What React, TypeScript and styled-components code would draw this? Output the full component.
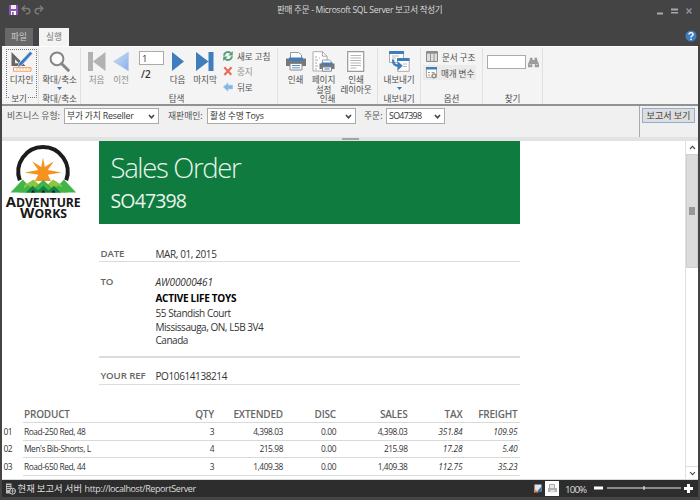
import React from "react";
import styled, { createGlobalStyle } from "styled-components";

const Global = createGlobalStyle`
  * { box-sizing: border-box; }
  body { margin: 0; background: #444; overflow: hidden; }
  svg { display: block; flex: none; }
`;
const ui = `"Noto Sans CJK KR", "Noto Sans", sans-serif`;
const latin = `"Open Sans", "Noto Sans", sans-serif`;

const Window = styled.div`
  width: 700px; height: 500px; background: #444; overflow: hidden;
  display: flex; flex-direction: column; padding: 0 2px 3px;
  font-family: ${ui}; font-size: 8.6px; color: #555;
`;
const TitleBar = styled.header`
  height: 28px; flex: none; display: grid; grid-template-columns: 275px minmax(0, 1fr) 60px; align-items: start;
  svg { margin-top: 5px; }
`;
const QuickAccess = styled.div`display: flex; gap: 3px; padding-left: 7px;`;
const Title = styled.div`
  font: 8.6px/20px "Open Sans", ${ui}; color: #d8d8d8; white-space: nowrap;
  letter-spacing: -0.32px;
`;
const WindowButtons = styled.div`display: flex; justify-content: flex-end; gap: 8px; padding-right: 6px;`;
const TabBar = styled.nav`
  height: 18px; flex: none; display: flex; gap: 6px; padding-left: 3px;
`;
const Tab = styled.div<{ $active?: boolean }>`
  width: ${(p) => (p.$active ? 30 : 28)}px; height: 18px; text-align: center; line-height: 17px;
  background: ${(p) => (p.$active ? "#f4f4f4" : "#686868")};
  color: ${(p) => (p.$active ? "#777" : "#d0d0d0")};
`;
const Help = styled.div`margin-left: auto; padding: 2px 1px 0 0;`;

const Ribbon = styled.section`
  height: 60px; flex: none; display: flex; background: #f4f4f4;
  border-top: 1px solid #fff; border-bottom: 2px solid #929292;
`;
const Group = styled.div<{ $w: number }>`
  width: ${(p) => p.$w}px; height: 56px; margin-top: 1px; flex: none; display: flex; flex-direction: column;
  border-right: 1px solid #e0e0e0;
`;
const GroupBody = styled.div<{ $left: number }>`
  height: 44px; flex: none; display: flex; align-items: flex-start;
  padding-left: ${(p) => p.$left}px;
`;
const GroupLabel = styled.div<{ $shift?: number }>`
  height: 12px; line-height: 13px; text-align: center; color: #505050; white-space: nowrap;
  padding-right: ${(p) => p.$shift ?? 0}px; letter-spacing: -0.1px;
  span { background: #f4f4f4; padding: 0 1px; position: relative; display: inline-block; height: 11px; }
`;
const Tool = styled.div<{ $w: number; $dim?: boolean; $dotted?: boolean }>`
  width: ${(p) => p.$w}px; height: ${(p) => (p.$dotted ? 49 : 44)}px; flex: none; display: flex; flex-direction: column; align-items: center;
  ${(p) => (p.$dotted ? "margin-top: 1px; padding-top: 1px; border: 1px dotted #777;" : "padding-top: 3px;")}
  color: ${(p) => (p.$dim ? "#8c8c8c" : "#505050")};
`;
const ToolLabel = styled.div`
  margin-top: 2px; line-height: 10.4px; text-align: center; white-space: pre; letter-spacing: -0.1px;
  & + svg { margin-top: 3px; }
`;
const Pager = styled.div`
  width: 25px; margin-top: 3px; color: #333; font: 9.5px/12px ${latin};
  div:last-child { font-size: 10px; font-weight: 600; padding: 3px 0 0 2px; }
`;
const Field = styled.div<{ $w: number; $h: number }>`
  width: ${(p) => p.$w}px; height: ${(p) => p.$h}px; background: #fff; border: 1px solid #aaa; padding-left: 2px;
  line-height: ${(p) => p.$h - 1}px;
`;
const SmallList = styled.div`display: flex; flex-direction: column;`;
const SmallTool = styled.div<{ $on?: boolean; $dim?: boolean; $h: number; $left?: number }>`
  height: ${(p) => p.$h}px; padding: 0 1px 0 ${(p) => p.$left ?? 3}px; display: flex; align-items: center; gap: 4px; white-space: nowrap;
  background: ${(p) => (p.$on ? "#ebebeb" : "none")}; color: ${(p) => (p.$dim ? "#909090" : "#505050")};
  letter-spacing: -0.05px;
`;
const FindBox = styled.div`display: flex; align-items: center; gap: 2px; margin-top: 7px;`;

const ParamBar = styled.section`
  height: 31px; flex: none; display: flex; align-items: flex-start; background: #f0f0f0; color: #555;
`;
const ParamLabel = styled.div<{ $w: number; $left: number }>`
  width: ${(p) => p.$w}px; margin-left: ${(p) => p.$left}px; line-height: 19px; white-space: nowrap; flex: none;
  font-size: 8.8px;
`;
const Select = styled.div<{ $w: number; $tight?: boolean }>`
  width: ${(p) => p.$w}px; height: 16px; margin-top: 2px; flex: none; background: #fff; border: 1px solid #ababab;
  display: flex; align-items: center; justify-content: space-between; padding: 0 3px 0 2px;
  font-family: "Open Sans", ${ui}; font-size: 8.8px; line-height: 14px; color: #333; white-space: nowrap;
  letter-spacing: ${(p) => (p.$tight ? -0.65 : -0.2)}px;
`;
const RunPane = styled.div`
  width: 59px; height: 31px; margin-left: auto; border-left: 1px solid #aaa; padding: 2px 0 0 2px;
`;
const RunButton = styled.div`
  width: 53px; height: 15px; border: 1px solid #8faed2; background: #dedede; text-align: center; line-height: 13px;
  font-size: 9.1px; color: #444; white-space: nowrap;
`;
const Splitter = styled.div`
  height: 4px; flex: none; background: #e2e2e2; display: flex; justify-content: center; align-items: center;
  div { width: 17px; height: 2px; background: #a4a4a4; }
`;
const Viewer = styled.main`
  height: 339px; flex: none; display: flex; background: #fff; overflow: hidden;
  border-bottom: 1px solid #d8dcd8;
`;
const Report = styled.div`width: 683px; flex: none; font-family: ${latin};`;
const Head = styled.div`display: flex; height: 83px;`;
const LogoCell = styled.div`width: 96.5px; padding: 4px 0 0 3px;`;
const Banner = styled.div`
  width: 421px; height: 83px; background: #0f7b3f; color: #e9f5ed; padding: 9px 0 0 12px; white-space: nowrap;
`;
const BannerTitle = styled.div`font-weight: 300; font-size: 27.5px; line-height: 36px; letter-spacing: -1.35px;`;
const BannerSub = styled.div`font-size: 19.5px; line-height: 30px; letter-spacing: -0.85px;`;
const Detail = styled.div<{ $h: number; $top: number; $line?: number }>`
  margin-left: 97px; width: 420.5px; height: ${(p) => p.$h}px; padding-top: ${(p) => p.$top}px;
  display: grid; grid-template-columns: 56.5px 1fr; border-bottom: ${(p) => p.$line ?? 1}px solid #dcdcdc;
  font-size: 10px; line-height: 14px; color: #333; white-space: nowrap; letter-spacing: -0.4px;
`;
const DetailKey = styled.div`font-weight: 600; font-size: 9.7px; color: #666; padding-left: 1.5px; letter-spacing: -0.12px;`;
const Customer = styled.div`
  em, strong { display: block; height: 16px; line-height: 14px; letter-spacing: -0.08px; }
  strong { color: #000; font-weight: 700; letter-spacing: -0.28px; }
  p { margin: 0; line-height: 13.5px; letter-spacing: -0.46px; }
`;
const Grid = styled.div<{ $head?: boolean; $h: number }>`
  display: grid; width: 517.5px; height: ${(p) => p.$h}px;
  grid-template-columns: 21px 147px 44px 69px 53px 71.5px 55px 57px;
  font-size: ${(p) => (p.$head ? 10 : 8.4)}px; font-weight: ${(p) => (p.$head ? 600 : 400)};
  line-height: ${(p) => p.$h - 0.3}px; color: ${(p) => (p.$head ? "#666" : "#333")};
  white-space: nowrap; letter-spacing: ${(p) => (p.$head ? -0.2 : -0.42)}px;
`;
const Cell = styled.div<{ $left?: boolean; $italic?: boolean; $index?: boolean }>`
  text-align: ${(p) => (p.$left || p.$index ? "left" : "right")};
  font-style: ${(p) => (p.$italic ? "italic" : "normal")};
  padding: ${(p) => (p.$index ? "0 0 0 1.5px" : p.$left ? "0 0 0 1px" : "0")};
  ${(p) => p.$italic && "letter-spacing: -0.15px;"}
  ${(p) => !p.$index && "border-bottom: 1px solid #d9d9d9;"}
  &:last-child { padding-right: 2px; }
`;
const HeadText = styled.div`padding-top: 22px; line-height: 15px;`;
const ScrollBar = styled.div`
  width: 13px; flex: none; display: flex; flex-direction: column; border-left: 1px solid #e0e0e0;
`;
const ArrowBox = styled.div<{ $end?: boolean }>`
  height: 13px; display: flex; align-items: center; justify-content: center;
  ${(p) => p.$end && "margin-top: auto; border-top: 1px solid #ddd;"}
`;
const Thumb = styled.div`
  height: 114px; background: #dbdbdb; border: 1px solid #cfcfcf; display: flex; align-items: center; justify-content: center;
`;
const Status = styled.footer`
  height: 17px; flex: none; background: #2d2d2d; display: flex; align-items: center; color: #ddd; padding: 0 4px 0 3px;
`;
const Server = styled.div`
  margin-left: 1.5px; font-size: 9.4px; line-height: 17px; white-space: nowrap;
  span { font: 9px/17px ${latin}; margin-left: 2.5px; letter-spacing: -0.4px; }
`;
const ViewModes = styled.div`display: flex; align-items: center; margin-left: auto; gap: 3px;`;
const ModeOn = styled.div`width: 14px; height: 15px; background: #fff; display: flex; align-items: center; justify-content: center;`;
const Zoom = styled.div`
  display: flex; align-items: center; margin-left: 6px; font: 9.8px/17px ${latin}; letter-spacing: -0.9px;
  span { width: 29px; padding-top: 2px; }
`;

const Caret = () => <svg width="5" height="3" viewBox="0 0 5 3"><path d="M0 0h5L2.5 3z" fill="#3b76b8" /></svg>;
const Chevron = ({ up, thin }: { up?: boolean; thin?: boolean }) => (
  <svg width="7" height="5" viewBox="0 0 7 5"><path d={up ? "M1 4L3.5 1.4 6 4" : "M1 1L3.5 3.7 6 1"} fill="none" stroke="#444" strokeWidth={thin ? 1.1 : 1.6} /></svg>
);
const Save = () => (
  <svg width="9" height="10" viewBox="0 0 9 10"><path d="M0 0h9v10H0z" fill="#8d55b5" /><path d="M2 0h5v4H2z" fill="#f3eaf8" /><path d="M2 6h5v4H2z" fill="#fff" /><path d="M3 7h1.7v3H3z" fill="#8d55b5" /></svg>
);
const Undo = ({ flip }: { flip?: boolean }) => (
  <svg width="10" height="10" viewBox="0 0 10 10"><g transform={flip ? "matrix(-1 0 0 1 10 0)" : undefined} fill="none" stroke="#7b7b7b" strokeWidth="1.5"><path d="M4 .7L1.2 3.6 4 6.5M1.4 3.6h4.8c3.5 0 3.5 5.2 0 5.2H5" /></g></svg>
);
const Design = () => (
  <svg width="22" height="21" viewBox="0 0 22 21">
    <path d="M.5 1v14h14zM4 8.200l4 4H4z" fill="#666" fillRule="evenodd" />
    <path d="M19.200.3l2.400 2.300L10.600 14.400l-4.200 2 1.600-4.300z" fill="#3c7dc0" stroke="#f4f4f4" strokeWidth=".6" />
    <path d="M2.500 16.700h17.500v3.500H2.500z" fill="#fff" stroke="#f29b57" /><path d="M6 17v2M9 17v2M12 17v2M15 17v2M18 17v2" stroke="#f29b57" strokeWidth=".7" />
  </svg>
);
const Magnifier = () => (
  <svg width="21" height="21" viewBox="0 0 21 21"><circle cx="8" cy="7.8" r="6.4" fill="#fafafa" stroke="#858585" strokeWidth="2" /><path d="M12.7 12.7l6.6 6.6" stroke="#858585" strokeWidth="3" strokeLinecap="round" /></svg>
);
const First = () => <svg width="18" height="21" viewBox="0 0 18 21"><path d="M0 1h5v19H0zM17.5 1v19L5 10.5z" fill="#b2b2b2" /></svg>;
const Prev = () => <svg width="16" height="21" viewBox="0 0 16 21"><defs><linearGradient id="prevFill" x2="1" y2="1"><stop stopColor="#cddff7" /><stop offset="1" stopColor="#8aafe8" /></linearGradient></defs><path d="M15.3 1.3v18.4L.7 10.5z" fill="url(#prevFill)" stroke="#aac4ec" strokeWidth=".7" /></svg>;
const Next = () => <svg width="12" height="21" viewBox="0 0 12 21"><path d="M0 1v19l12-9.5z" fill="#3f7ebd" /></svg>;
const Last = () => <svg width="18" height="21" viewBox="0 0 18 21"><path d="M0 1v19l12.5-9.5zM12.5 1h5v19h-5z" fill="#3f7ebd" /></svg>;
const Refresh = () => <svg width="10" height="10" viewBox="0 0 10 10"><g fill="none" stroke="#55a07b" strokeWidth="1.9"><path d="M1.1 4.7C1.3 1 6-.2 8.1 2.5M8.9 5.3C8.7 9 4 10.2 1.9 7.5" /></g><path d="M9.8 0v4.5H5.3zM.2 10V5.5h4.5z" fill="#55a07b" /></svg>;
const Stop = () => <svg width="10" height="10" viewBox="0 0 10 10"><path d="M1.3 1.3l7 7.5M8.5 1.2L1.4 9" stroke="#e76b59" strokeWidth="2.1" /></svg>;
const Back = () => <svg width="10" height="10" viewBox="0 0 10 10"><path d="M.3 5L5 .9v2.3h4.7v3.7H5v2.3z" fill="#85b4e6" stroke="#a4c6ec" strokeWidth=".6" /></svg>;
const Printer = () => (
  <svg width="20" height="21" viewBox="0 0 20 21"><path d="M4.500 1.500h8L15.500 4v4h-11z" fill="#fff" stroke="#999" /><path d="M0 7.500h3V9h14V7.500h3V15H0z" fill="#777" /><path d="M3 6.500h14V10H3z" fill="#3f7ebd" /><path d="M4 12.500h12v6.500H4z" fill="#fff" stroke="#888" /><path d="M6 14.500h8M6 16.800h8" stroke="#3f7ebd" strokeWidth=".9" /></svg>
);
const PageSetup = () => (
  <svg width="23" height="21" viewBox="0 0 23 21"><path d="M1 .7h9.5l4.500 4.500V20H1z" fill="#fff" stroke="#aaa" /><path d="M10.500.7v4.500H15M3 6h2M3 9h3M3 12h2M3 15h3M3 18h2M7 7h1" stroke="#aaa" fill="none" /><path d="M10.500 9h7l2 2v3h-9z" fill="#fff" stroke="#999" /><path d="M7.500 12.500h15V18h-15z" fill="#777" /><path d="M9.500 11.500h11V14h-11z" fill="#3f7ebd" /><path d="M10.500 16h9v4.200h-9z" fill="#fff" stroke="#888" /><path d="M12.500 18h5" stroke="#3f7ebd" /></svg>
);
const PrintLayout = () => (
  <svg width="18" height="21" viewBox="0 0 18 21"><path d="M.7.7h16v19.6H.7z" fill="#fff" stroke="#999" strokeWidth="1.2" /><path d="M3.500 4.500h10.500M3.500 7h10.500M3.500 9.500h10.500M3.500 12h10.500M3.500 14.500h10.500M3.500 17h6" stroke="#b5b5b5" /></svg>
);
const Export = () => (
  <svg width="22" height="21" viewBox="0 0 22 21"><path d="M1.500.5h14v11h-14z" fill="#fff" stroke="#aaa" /><path d="M1 0h15v3H1z" fill="#3f7ebd" /><path d="M4 5h7M4 7h4" stroke="#bbb" /><path d="M9.500 7.500h11.700v12.800H9.500z" fill="#fff" stroke="#aaa" /><path d="M9 7h12.500v3H9z" fill="#3f7ebd" /><path d="M15 13h4M15 15.500h4" stroke="#bbb" /><path d="M5.200 8.500c-.6 4.800 1.800 6.300 6 6.300" fill="none" stroke="#3f7ebd" strokeWidth="2.400" /><path d="M10 10.500l4.800 4.200-4.800 4.500z" fill="#3f7ebd" /></svg>
);
const DocMap = () => <svg width="12" height="11" viewBox="0 0 12 11"><path d="M.5.5h11v10H.5z" fill="#ddd" stroke="#8a8a8a" /><path d="M1 1h10v1.600H1z" fill="#8c8c8c" /><path d="M4.500 2v8M8 2v8" stroke="#999" /></svg>;
const Params = () => <svg width="11" height="12" viewBox="0 0 11 12"><path d="M.5.5h10v9.800H.5z" fill="#fff" stroke="#aaa" /><path d="M0 0h11v2.500H0z" fill="#3f7ebd" /><path d="M2 5.500h2M2 8h2M5.500 5.500h3" stroke="#999" /><circle cx="8" cy="8.800" r="1.900" fill="#fff" stroke="#8d8d8d" strokeWidth="1.500" /></svg>;
const Binoculars = () => <svg width="11" height="11" viewBox="0 0 11 11"><path d="M2 .8h2.500V3h2V.8H9l.3 2.400L11 7v3.200H6.700V7H4.300v3.200H0V7l1.700-3.800z" fill="#9c9c9c" /><path d="M1.500 7.500h1.700M7.800 7.500h1.700" stroke="#d3d3d3" /></svg>;

const Logo = () => (
  <svg width="77" height="77" viewBox="0 0 77 77">
    <path d="M14.800 35.200A24.700 24.700 0 1 1 61.200 35.200" fill="none" stroke="#1c1c1c" strokeWidth="4" />
    <path d="M38 12.500l1.800 9.500 9.100-5.700-6.100 8.600 13.700 2.600-13.700 2.300L46 36H30l3.200-6.200-13.700-2.300 13.700-2.600-6.100-8.600 9.100 5.700z" fill="#f6921e" />
    <path d="M5.500 47.500L17.700 34.500 30 47.500z" fill="#42b549" />
    <path d="M71.200 47.500L59 34.500 46.700 47.500z" fill="#42b549" />
    <path d="M19 47.500v-7L28.500 34.500l9.800 9 9.800-9 9.400 6-6 7z" fill="#8dc63f" />
    <path d="M14 47.500l9-7.200 5 4.200 10.300-9.800L48.500 44.500l5-4.200 9 7.200z" fill="#42b549" />
    <path d="M21 47.500l6.500-6.800 5.500 4.800 5.300-4.800 5.300 4.800 5.500-4.800 6.500 6.800z" fill="#138044" />
    <path d="M26 47.500l2-2.500 2 2.500zM36.300 47.500l2-2.500 2 2.500zM46.500 47.500l2-2.500 2 2.500z" fill="#181818" />
    <g fill="#181818" fontFamily="Open Sans, sans-serif" fontWeight="700">
      <text x=".7" y="61.500" fontSize="15" textLength="75" lengthAdjust="spacingAndGlyphs">A<tspan fontSize="12.300">DVENTURE</tspan></text>
      <text x="15" y="73.300" fontSize="15" textLength="47" lengthAdjust="spacingAndGlyphs">W<tspan fontSize="12.300">ORKS</tspan></text>
    </g>
  </svg>
);

const columns = ["PRODUCT", "QTY", "EXTENDED", "DISC", "SALES", "TAX", "FREIGHT"];
const rows = [
  ["01", "Road-250 Red, 48", "3", "4,398.03", "0.00", "4,398.03", "351.84", "109.95"],
  ["02", "Men's Bib-Shorts, L", "4", "215.98", "0.00", "215.98", "17.28", "5.40"],
  ["03", "Road-650 Red, 44", "3", "1,409.38", "0.00", "1,409.38", "112.75", "35.23"],
];

export default function App() {
  return (
    <Window>
      <Global />
      <TitleBar>
        <QuickAccess><Save /><Undo /><Undo flip /></QuickAccess>
        <Title>판매 주문 - Microsoft SQL Server 보고서 작성기</Title>
        <WindowButtons>
          <svg width="6" height="10" viewBox="0 0 6 10"><path d="M0 7.500h6v2H0z" fill="#aaa" /></svg>
          <svg width="7" height="10" viewBox="0 0 7 10"><path d="M0 3.500h7v2H0zM0 7h7v1.500H0z" fill="#a4a8b0" /></svg>
          <svg width="6" height="10" viewBox="0 0 6 10"><path d="M.5 3.500l5 5M5.500 3.500l-5 5" stroke="#8795a8" strokeWidth="1.400" /></svg>
        </WindowButtons>
      </TitleBar>
      <TabBar>
        <Tab>파일</Tab>
        <Tab $active>실행</Tab>
        <Help>
          <svg width="12" height="12" viewBox="0 0 12 12"><circle cx="6" cy="6" r="5.500" fill="#3c7dc0" /><path d="M4 4.500c0-2.600 4.100-2.300 4.100-.1C8.100 5.800 6 5.800 6 7.500" fill="none" stroke="#fff" strokeWidth="1.400" /><circle cx="6" cy="9.300" r=".85" fill="#fff" /></svg>
        </Help>
      </TabBar>

      <Ribbon>
        <Group $w={37}>
          <GroupBody $left={4}><Tool $w={31} $dotted><Design /><ToolLabel>디자인</ToolLabel></Tool></GroupBody>
          <GroupLabel $shift={2}><span>보기</span></GroupLabel>
        </Group>
        <Group $w={42}>
          <GroupBody $left={0}><Tool $w={41}><Magnifier /><ToolLabel>확대/축소</ToolLabel><Caret /></Tool></GroupBody>
          <GroupLabel>확대/축소</GroupLabel>
        </Group>
        <Group $w={197}>
          <GroupBody $left={3}>
            <Tool $w={25} $dim><First /><ToolLabel>처음</ToolLabel></Tool>
            <Tool $w={24} $dim><Prev /><ToolLabel>이전</ToolLabel></Tool>
            <GroupBody $left={6}><Pager><Field $w={25} $h={14}>1</Field><div>/2</div></Pager></GroupBody>
            <Tool $w={27}><Next /><ToolLabel>다음</ToolLabel></Tool>
            <Tool $w={28}><Last /><ToolLabel>마지막</ToolLabel></Tool>
            <SmallList>
              <SmallTool $h={16} $left={4}><Refresh />새로 고침</SmallTool>
              <SmallTool $h={14} $left={4} $dim><Stop />중지</SmallTool>
              <SmallTool $h={17} $left={4}><Back />뒤로</SmallTool>
            </SmallList>
          </GroupBody>
          <GroupLabel $shift={5}>탐색</GroupLabel>
        </Group>
        <Group $w={100}>
          <GroupBody $left={3}>
            <Tool $w={29}><Printer /><ToolLabel>인쇄</ToolLabel></Tool>
            <Tool $w={27}><PageSetup /><ToolLabel>{"페이지\n설정"}</ToolLabel></Tool>
            <Tool $w={38}><PrintLayout /><ToolLabel>{"인쇄\n레이아웃"}</ToolLabel></Tool>
          </GroupBody>
          <GroupLabel>인쇄</GroupLabel>
        </Group>
        <Group $w={43}>
          <GroupBody $left={0}><Tool $w={42}><Export /><ToolLabel>내보내기</ToolLabel><Caret /></Tool></GroupBody>
          <GroupLabel>내보내기</GroupLabel>
        </Group>
        <Group $w={62}>
          <GroupBody $left={2}>
            <SmallList>
              <SmallTool $h={17}><DocMap />문서 구조</SmallTool>
              <SmallTool $h={15} $on><Params />매개 변수</SmallTool>
            </SmallList>
          </GroupBody>
          <GroupLabel>옵션</GroupLabel>
        </Group>
        <Group $w={60}>
          <GroupBody $left={4}><FindBox><Field $w={39} $h={14} /><Binoculars /></FindBox></GroupBody>
          <GroupLabel>찾기</GroupLabel>
        </Group>
      </Ribbon>

      <ParamBar>
        <ParamLabel $left={5} $w={57}>비즈니스 유형:</ParamLabel>
        <Select $w={95}>부가 가치 Reseller<Chevron /></Select>
        <ParamLabel $left={9} $w={39}>재판매인:</ParamLabel>
        <Select $w={149}>활성 수명 Toys<Chevron /></Select>
        <ParamLabel $left={8} $w={22}>주문:</ParamLabel>
        <Select $w={59} $tight>SO47398<Chevron /></Select>
        <RunPane><RunButton>보고서 보기</RunButton></RunPane>
      </ParamBar>
      <Splitter><div /></Splitter>

      <Viewer>
        <Report>
          <Head>
            <LogoCell><Logo /></LogoCell>
            <Banner><BannerTitle>Sales Order</BannerTitle><BannerSub>SO47398</BannerSub></Banner>
          </Head>
          <Detail $h={38} $top={23}><DetailKey>DATE</DetailKey><div>MAR, 01, 2015</div></Detail>
          <Detail $h={96} $top={13} $line={2}>
            <DetailKey>TO</DetailKey>
            <Customer>
              <em>AW00000461</em><strong>ACTIVE LIFE TOYS</strong>
              <p>55 Standish Court</p><p>Mississauga, ON, L5B 3V4</p><p>Canada</p>
            </Customer>
          </Detail>
          <Detail $h={27} $top={11}><DetailKey>YOUR REF</DetailKey><div>PO10614138214</div></Detail>
          <Grid $head $h={38}>
            <Cell $index />
            {columns.map((c, i) => <Cell key={c} $left={i === 0}><HeadText>{c}</HeadText></Cell>)}
          </Grid>
          {rows.map((r) => (
            <Grid key={r[0]} $h={17.3}>
              {r.map((v, i) => <Cell key={i} $index={i === 0} $left={i === 1} $italic={i > 5}>{v}</Cell>)}
            </Grid>
          ))}
        </Report>
        <ScrollBar>
          <ArrowBox><Chevron up thin /></ArrowBox>
          <Thumb><svg width="6" height="8" viewBox="0 0 6 8"><path d="M0 1h6M0 3h6M0 5h6M0 7h6" stroke="#555" /></svg></Thumb>
          <ArrowBox $end><Chevron thin /></ArrowBox>
        </ScrollBar>
      </Viewer>

      <Status>
        <svg width="11" height="12" viewBox="0 0 11 12"><path d="M1 .5h5.500v10H1z" fill="#bbb" /><path d="M2 2.500h3.500M2 4.500h3.500M2 6.500h3" stroke="#444" /><circle cx="7.500" cy="8.200" r="3" fill="#2d2d2d" stroke="#ccc" /><path d="M5 8h5M7.500 5.500v5" stroke="#ccc" strokeWidth=".7" /></svg>
        <Server>현재 보고서 서버<span>http://localhost/ReportServer</span></Server>
        <ViewModes>
          <svg width="8" height="9" viewBox="0 0 8 9"><path d="M.5.500h7v7h-7z" fill="#dfe5ee" /><path d="M7.500 2.500v5.500h-5z" fill="#3a6ea5" /><path d="M0 4.500L5 8.500H0z" fill="#e7893c" /></svg>
          <ModeOn><svg width="9" height="9" viewBox="0 0 9 9"><path d="M1.500.500h5v5h-5z" fill="#e6e9ed" stroke="#aaa" /><path d="M0 4h9v4H0z" fill="#aab3bd" /><path d="M2 6h5v2.500H2z" fill="#e4dfc0" /></svg></ModeOn>
        </ViewModes>
        <Zoom>
          <span>100%</span>
          <svg width="100" height="11" viewBox="0 0 100 11"><path d="M0 3.500h9v3H0zM90 4h9v3h-9zM93 1h3v9h-3z" fill="#fff" /><path d="M13 5h74" stroke="#aaa" strokeWidth="1.500" /><path d="M50 3v4" stroke="#fff" /></svg>
        </Zoom>
      </Status>
    </Window>
  );
}
